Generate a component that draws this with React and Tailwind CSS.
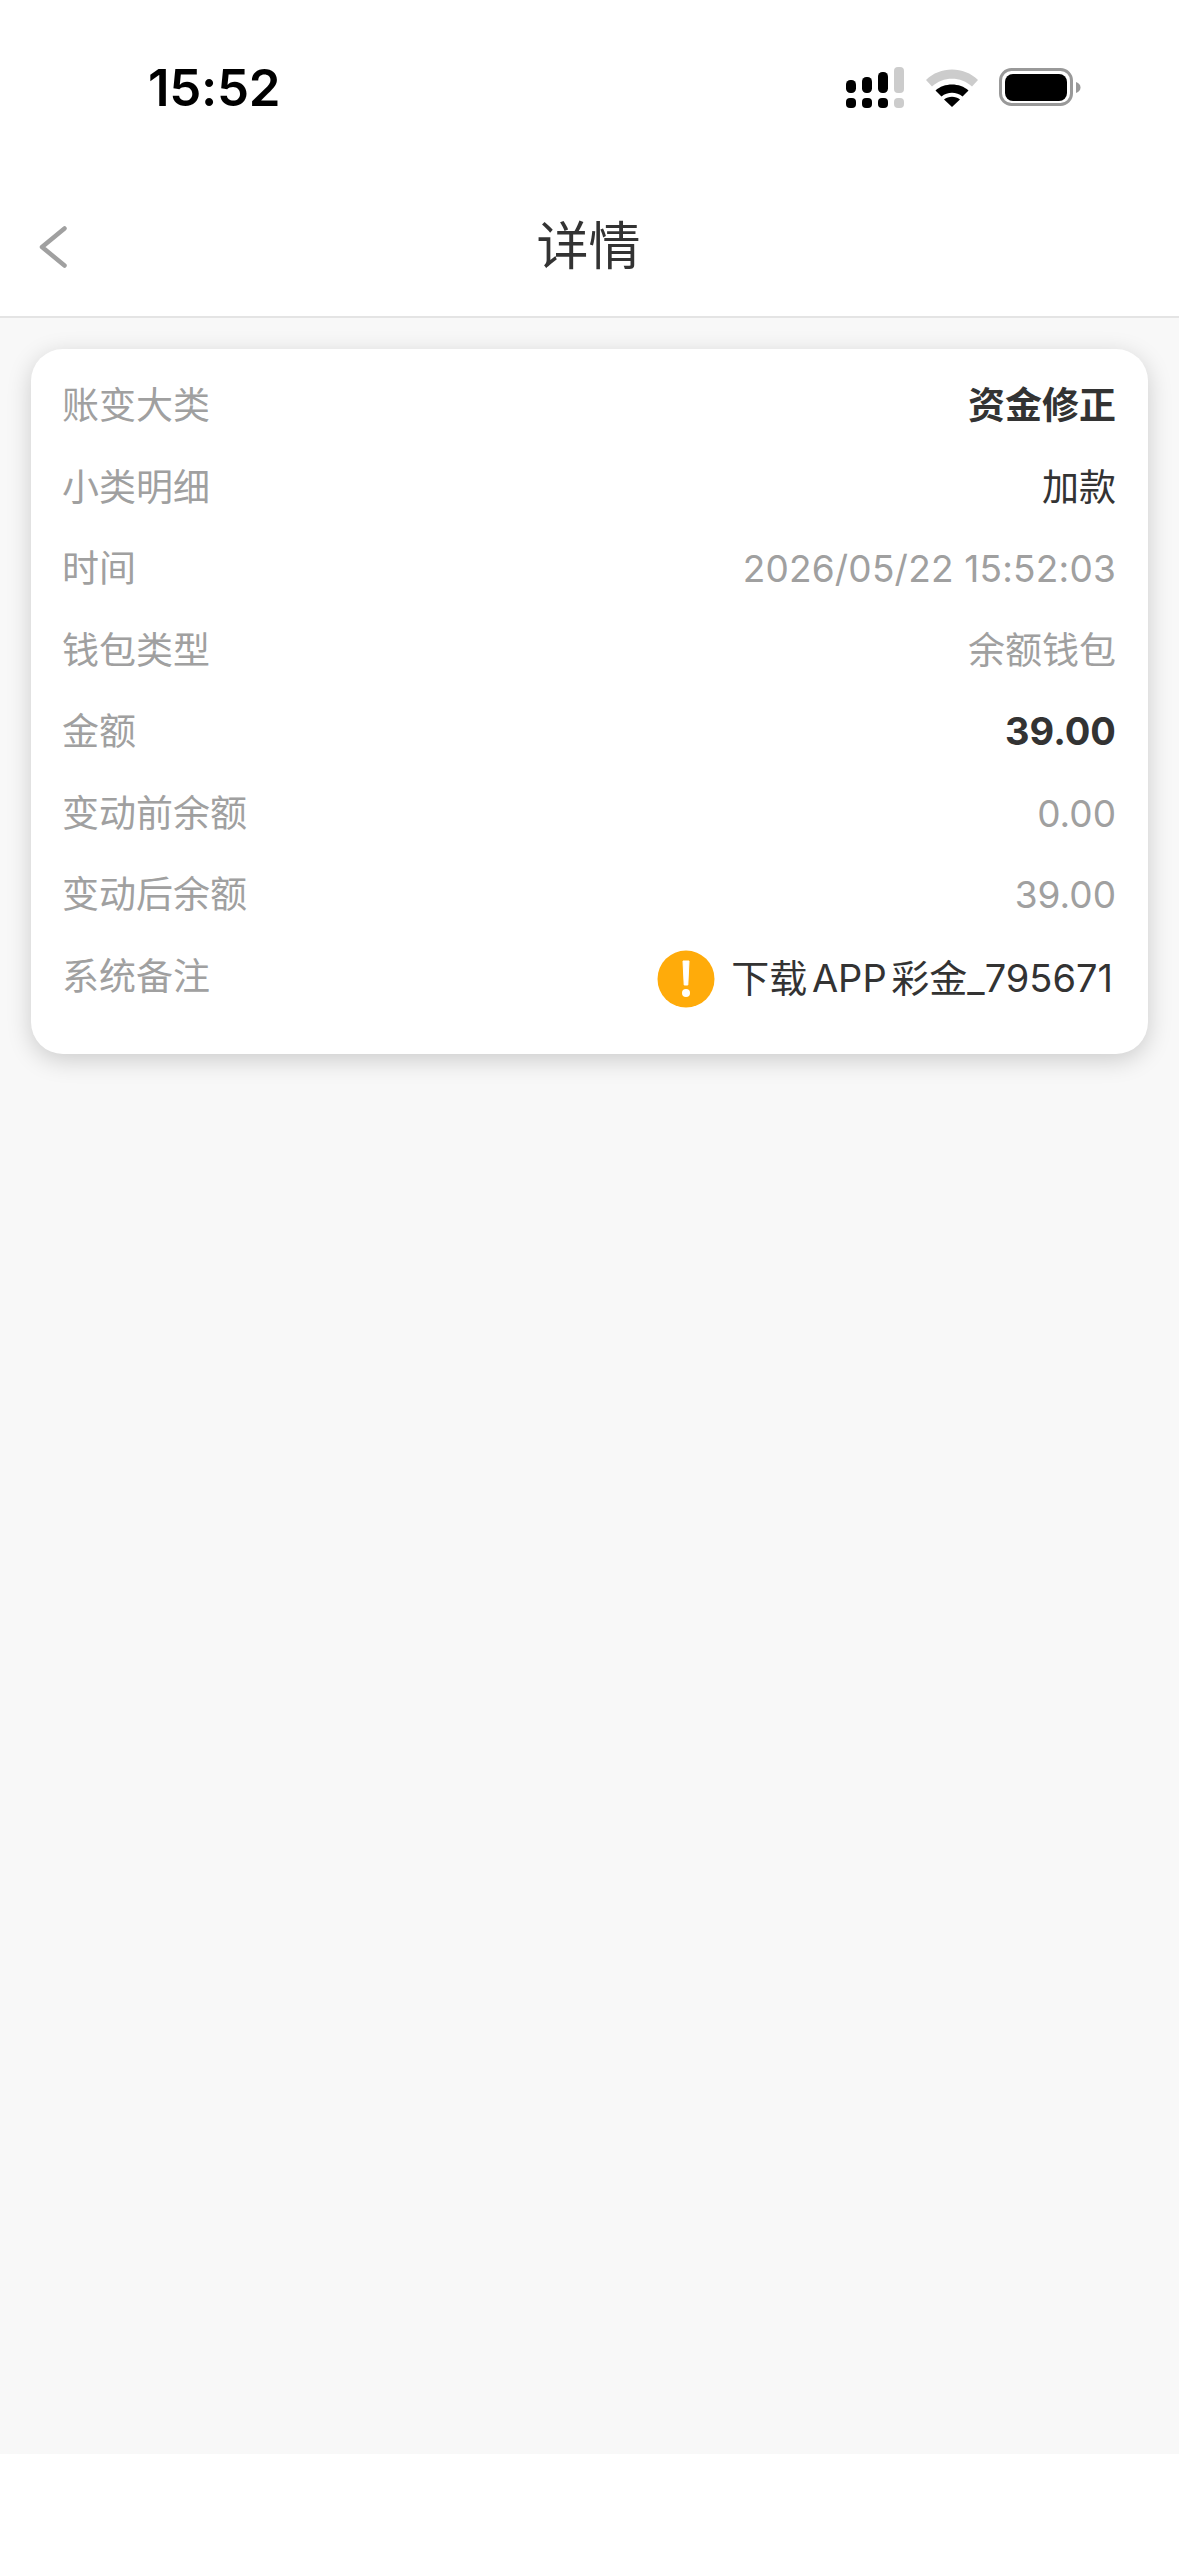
const F = "font-['Inter','Noto_Sans_CJK_SC',sans-serif]";

function Signal() {
  return (
    <svg width="58" height="42" viewBox="0 0 58 42" className="block">
      <rect x="0" y="13" width="10" height="13" rx="4.500" fill="#000" />
      <rect x="16" y="10" width="10" height="16" rx="4.500" fill="#000" />
      <rect x="32" y="5" width="10" height="21" rx="4.500" fill="#000" />
      <rect x="48" y="0" width="10" height="26" rx="4" fill="#ccc" />
      <rect x="0" y="31" width="10" height="10" rx="4" fill="#000" />
      <rect x="16" y="31" width="10" height="10" rx="4" fill="#000" />
      <rect x="32" y="31" width="10" height="10" rx="4" fill="#000" />
      <rect x="48" y="31" width="10" height="10" rx="4" fill="#ccc" />
    </svg>
  );
}

function Wifi() {
  return (
    <svg width="52" height="38" viewBox="0 0 52 38" className="block">
      <path d="M0 11C14 -3 38 -3 52 11L46 17.500C35 7 17 7 6 17.500Z" fill="#ccc" />
      <path d="M9.500 21.500C18 13.500 34 13.500 42.500 21.500L36.500 27.500C30.500 22.500 21.500 22.500 15.500 27.500Z" fill="#000" />
      <path d="M18 30.500C22.500 26.800 29.500 26.800 34 30.500L26 38Z" fill="#000" />
    </svg>
  );
}

function Battery() {
  return (
    <svg width="82" height="40" viewBox="0 0 82 40" className="block">
      <rect x="1.500" y="1.500" width="71" height="35" rx="11" fill="none" stroke="#999" strokeWidth="3" />
      <rect x="6" y="6" width="62" height="27" rx="8" fill="#000" />
      <path d="M77 14C80 15 81.500 17 81.500 19.500C81.500 22 80 24 77 25Z" fill="#999" />
    </svg>
  );
}

function Row({ label, value, valueClass }) {
  return (
    <div className="flex h-[81.500px] items-center justify-between">
      <span className="text-[37px] text-[#a0a0a0]">{label}</span>
      <span className={valueClass}>{value}</span>
    </div>
  );
}

export default function App() {
  const grey = "text-[37px] text-[#a0a0a0]";
  return (
    <div className={`${F} flex h-[2556px] w-[1179px] flex-col overflow-hidden bg-white`}>
      <div className="flex h-[160px] shrink-0 items-start justify-between pl-[148px] pr-[98px] pt-[57px]">
        <span className="text-[51px] font-semibold leading-[62px] tracking-[-0.3px] text-black">15:52</span>
        <div className="flex items-center pt-[10px]">
          <Signal />
          <div className="ml-[22px]"><Wifi /></div>
          <div className="ml-[21px]"><Battery /></div>
        </div>
      </div>
      <div className="relative flex h-[158px] shrink-0 items-center justify-center border-b-2 border-[#e4e4e4] pr-[2px] pt-[18px]">
        <svg width="28" height="42" viewBox="0 0 28 42" className="absolute left-[39px] top-[66px]">
          <path d="M25.500 2.500L3 21L25.500 39.500" fill="none" stroke="#a0a0a0" strokeWidth="4.500" strokeLinecap="round" strokeLinejoin="round" />
        </svg>
        <span className="text-[52px] leading-[62px] text-[#333]">详情</span>
      </div>
      <div className="flex-1 bg-[#f8f8f8] px-[31px] pt-[31px]">
        <div className="h-[705px] rounded-[32px] bg-white pl-[31px] pr-[32px] pt-[16px] shadow-[0_6px_24px_rgba(0,0,0,0.18)]">
          <Row label="账变大类" value="资金修正" valueClass="text-[37px] font-bold text-[#333]" />
          <Row label="小类明细" value="加款" valueClass="text-[37px] text-[#333]" />
          <Row label="时间" value="2026/05/22 15:52:03" valueClass={`${grey} tracking-[0.2px]`} />
          <Row label="钱包类型" value="余额钱包" valueClass={grey} />
          <Row label="金额" value="39.00" valueClass="text-[38px] font-bold text-[#333]" />
          <Row label="变动前余额" value="0.00" valueClass={grey} />
          <Row label="变动后余额" value="39.00" valueClass={grey} />
          <div className="flex h-[81.500px] items-center justify-between">
            <span className={grey}>系统备注</span>
            <div className="flex items-center pr-[3px] pt-[5px]">
              <svg width="58" height="58" viewBox="0 0 58 58" className="mr-[16px] block">
                <circle cx="29" cy="29" r="28.500" fill="#ffab0a" />
                <path d="M26 11H32L30.800 35H27.200Z" fill="#fff" stroke="#fff" strokeWidth="1" strokeLinejoin="round" />
                <circle cx="29" cy="43" r="4" fill="#fff" />
              </svg>
              <span className="text-[38px] text-[#333] [word-spacing:-6px]">下载 APP 彩金_795671</span>
            </div>
          </div>
        </div>
      </div>
      <div className="h-[102px] shrink-0 bg-white" />
    </div>
  );
}
